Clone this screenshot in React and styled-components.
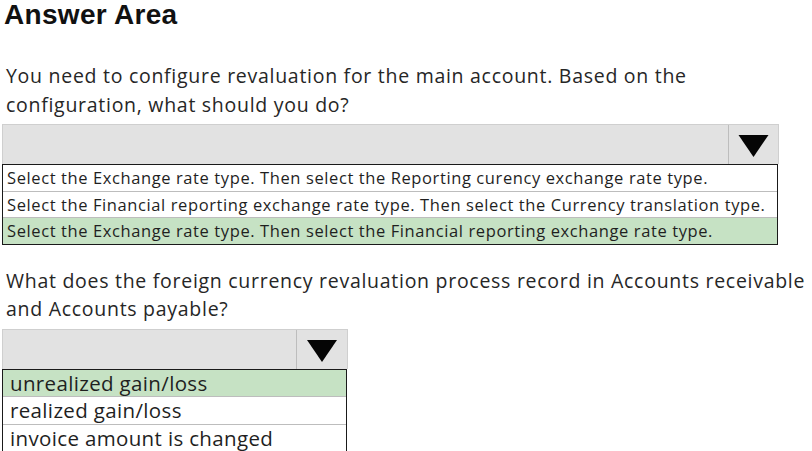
import styled, { createGlobalStyle } from "styled-components";

const GlobalStyle = createGlobalStyle`
  html, body {
    margin: 0;
    padding: 0;
    background: #ffffff;
  }
  body {
    width: 812px;
    height: 451px;
    overflow: hidden;
  }
`;

const Page = styled.div`
  display: flex;
  flex-direction: column;
  padding: 0 0 0 2px;
  color: #232323;
  font-family: "Open Sans", "Noto Sans", sans-serif;
`;

const Title = styled.h1`
  margin: 0;
  padding: 0 0 0 2px;
  font-family: "Liberation Sans", Arial, sans-serif;
  font-weight: 700;
  font-size: 28px;
  line-height: 30px;
  letter-spacing: 0.3px;
  color: #111;
`;

const Question = styled.p`
  margin: ${(p) => p.$top}px 0 0 0;
  padding-left: 4px;
  font-size: 19.5px;
  line-height: 28.5px;
  letter-spacing: 0.72px;
  white-space: nowrap;
  color: #262626;
`;

const Select = styled.div`
  width: ${(p) => p.$width}px;
  margin-top: ${(p) => p.$top}px;
  display: flex;
  flex-direction: column;
`;

const Field = styled.div`
  height: ${(p) => p.$height}px;
  display: flex;
  background: #e2e2e2;
  border: 1px solid #cfcfcf;
  border-bottom: none;
  box-sizing: border-box;
`;

const FieldBody = styled.div`
  flex: 1;
`;

const ArrowButton = styled.div`
  width: ${(p) => p.$width}px;
  display: flex;
  align-items: center;
  justify-content: center;
  border-left: 1.5px solid #bdbdbd;
  padding-top: 3px;
  box-sizing: border-box;
`;

const Options = styled.ul`
  list-style: none;
  margin: 0;
  padding: 0;
  width: ${(p) => p.$width}px;
  border: 1.5px solid #1a1a1a;
  box-sizing: border-box;
`;

const Option = styled.li`
  height: ${(p) => p.$height}px;
  display: flex;
  align-items: center;
  padding-left: ${(p) => p.$indent}px;
  font-size: ${(p) => p.$size}px;
  letter-spacing: ${(p) => p.$spacing}px;
  white-space: nowrap;
  background: ${(p) => (p.$selected ? "#c6e2c4" : "#ffffff")};
  border-top: ${(p) => (p.$first ? "none" : "1px solid #bdbdbd")};
  color: #1f1f1f;
`;

const Triangle = ({ w, h }) => (
  <svg width={w} height={h} viewBox="0 0 30 22">
    <polygon points="0,0 30,0 15,22" fill="#050505" />
  </svg>
);

const Dropdown = ({ width, top, fieldHeight, buttonWidth, tri, options, rowHeight, size, spacing, indent }) => (
  <Select $width={width} $top={top}>
    <Field $height={fieldHeight}>
      <FieldBody />
      <ArrowButton $width={buttonWidth}>
        <Triangle w={tri[0]} h={tri[1]} />
      </ArrowButton>
    </Field>
    <Options $width={width - 1}>
      {options.map((o, i) => (
        <Option
          key={o.text}
          $first={i === 0}
          $selected={o.selected}
          $height={rowHeight}
          $size={size}
          $spacing={spacing}
          $indent={indent}
        >
          {o.text}
        </Option>
      ))}
    </Options>
  </Select>
);

const first = [
  { text: "Select the Exchange rate type. Then select the Reporting curency exchange rate type." },
  { text: "Select the Financial reporting exchange rate type. Then select the Currency translation type." },
  { text: "Select the Exchange rate type. Then select the Financial reporting exchange rate type.", selected: true },
];

const second = [
  { text: "unrealized gain/loss", selected: true },
  { text: "realized gain/loss" },
  { text: "invoice amount is changed" },
];

export default function App() {
  return (
    <>
      <GlobalStyle />
      <Page>
        <Title>Answer Area</Title>
        <Question $top={32}>
          You need to configure revaluation for the main account. Based on the
          <br />
          configuration, what should you do?
        </Question>
        <Dropdown
          width={777}
          top={5}
          fieldHeight={40}
          buttonWidth={50}
          tri={[31, 22]}
          options={first}
          rowHeight={25.5}
          size={16.5}
          spacing={0.6}
          indent={4}
        />
        <Question $top={22}>
          What does the foreign currency revaluation process record in Accounts receivable
          <br />
          and Accounts payable?
        </Question>
        <Dropdown
          width={346}
          top={5}
          fieldHeight={40}
          buttonWidth={51}
          tri={[30, 22]}
          options={second}
          rowHeight={26.5}
          size={20.5}
          spacing={0.35}
          indent={7}
        />
      </Page>
    </>
  );
}
